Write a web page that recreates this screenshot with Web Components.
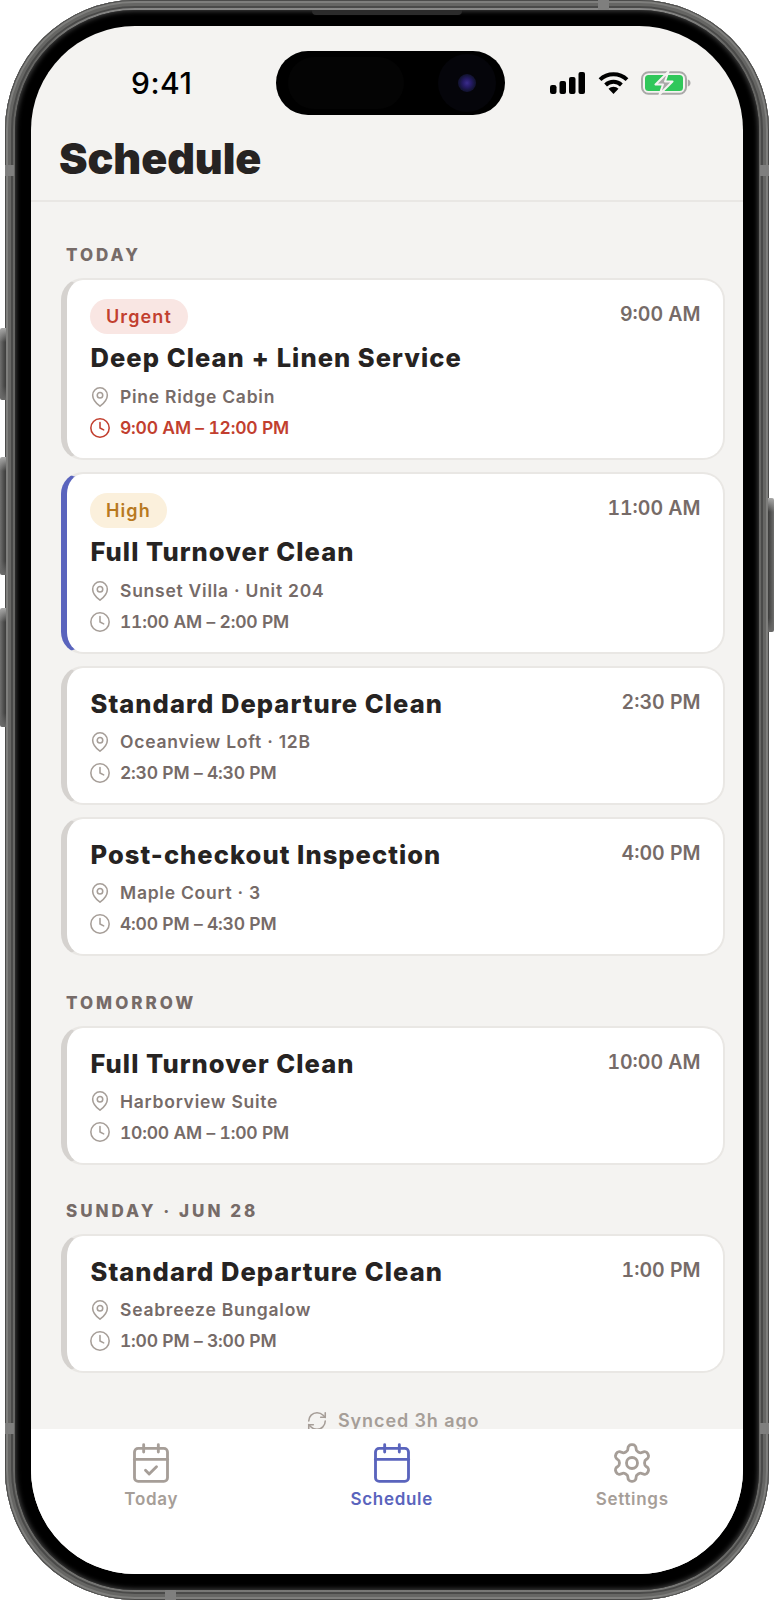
<!doctype html>
<html lang="en">
<head>
<meta charset="utf-8">
<title>Schedule</title>
<style>
  html, body { margin: 0; padding: 0; background: #fff; }
  body { width: 774px; height: 1600px; overflow: hidden; font-family: Inter, "Noto Sans", sans-serif; }
</style>
</head>
<body>
<phone-frame>
  <status-bar slot="status"></status-bar>
  <screen-title slot="title">Schedule</screen-title>

  <day-label>TODAY</day-label>
  <schedule-card time="9:00 AM" priority="urgent" late>
    <span slot="badge">Urgent</span>
    Deep Clean + Linen Service
    <span slot="place">Pine Ridge Cabin</span>
    <span slot="hours">9:00 AM – 12:00 PM</span>
  </schedule-card>
  <schedule-card time="11:00 AM" priority="high" current>
    <span slot="badge">High</span>
    Full Turnover Clean
    <span slot="place">Sunset Villa · Unit 204</span>
    <span slot="hours">11:00 AM – 2:00 PM</span>
  </schedule-card>
  <schedule-card time="2:30 PM">
    Standard Departure Clean
    <span slot="place">Oceanview Loft · 12B</span>
    <span slot="hours">2:30 PM – 4:30 PM</span>
  </schedule-card>
  <schedule-card time="4:00 PM">
    Post-checkout Inspection
    <span slot="place">Maple Court · 3</span>
    <span slot="hours">4:00 PM – 4:30 PM</span>
  </schedule-card>

  <day-label>TOMORROW</day-label>
  <schedule-card time="10:00 AM">
    Full Turnover Clean
    <span slot="place">Harborview Suite</span>
    <span slot="hours">10:00 AM – 1:00 PM</span>
  </schedule-card>

  <day-label>SUNDAY · JUN 28</day-label>
  <schedule-card time="1:00 PM">
    Standard Departure Clean
    <span slot="place">Seabreeze Bungalow</span>
    <span slot="hours">1:00 PM – 3:00 PM</span>
  </schedule-card>

  <sync-note>Synced 3h ago</sync-note>

  <tab-bar slot="tabs">
    <tab-item icon="calendar-check">Today</tab-item>
    <tab-item icon="calendar" active>Schedule</tab-item>
    <tab-item icon="settings">Settings</tab-item>
  </tab-bar>
</phone-frame>

<script>
const ICONS = {
  pin: `<path d="M20 10c0 6-8 12-8 12s-8-6-8-12a8 8 0 0 1 16 0Z"/><circle cx="12" cy="10" r="3"/>`,
  clock: `<circle cx="12" cy="12" r="10"/><polyline points="12 6 12 12 16 14"/>`,
  sync: `<path d="M3 12a9 9 0 0 1 9-9 9.75 9.75 0 0 1 6.74 2.74L21 8"/><path d="M21 3v5h-5"/><path d="M21 12a9 9 0 0 1-9 9 9.75 9.75 0 0 1-6.74-2.74L3 16"/><path d="M8 16H3v5"/>`,
  calendar: `<path d="M8 2v4"/><path d="M16 2v4"/><rect x="3" y="4" width="18" height="18" rx="2"/><path d="M3 10h18"/>`,
  "calendar-check": `<path d="M8 2v4"/><path d="M16 2v4"/><rect x="3" y="4" width="18" height="18" rx="2"/><path d="M3 10h18"/><path d="m9 16 2 2 4-4"/>`,
  settings: `<path d="M12.22 2h-.44a2 2 0 0 0-2 2v.18a2 2 0 0 1-1 1.73l-.43.25a2 2 0 0 1-2 0l-.15-.08a2 2 0 0 0-2.73.73l-.22.38a2 2 0 0 0 .73 2.73l.15.1a2 2 0 0 1 1 1.72v.51a2 2 0 0 1-1 1.74l-.15.09a2 2 0 0 0-.73 2.73l.22.38a2 2 0 0 0 2.73.73l.15-.08a2 2 0 0 1 2 0l.43.25a2 2 0 0 1 1 1.73V20a2 2 0 0 0 2 2h.44a2 2 0 0 0 2-2v-.18a2 2 0 0 1 1-1.73l.43-.25a2 2 0 0 1 2 0l.15.08a2 2 0 0 0 2.73-.73l.22-.39a2 2 0 0 0-.73-2.73l-.15-.08a2 2 0 0 1-1-1.74v-.5a2 2 0 0 1 1-1.74l.15-.09a2 2 0 0 0 .73-2.73l-.22-.38a2 2 0 0 0-2.73-.73l-.15.08a2 2 0 0 1-2 0l-.43-.25a2 2 0 0 1-1-1.73V4a2 2 0 0 0-2-2z"/><circle cx="12" cy="12" r="3"/>`,
}

class ShadowElement extends HTMLElement {
  static css = ""
  static template = ""

  constructor() {
    super(...arguments)

    const shadow = this.attachShadow({ mode: "open" })

    shadow.innerHTML = `
      <style>
        ${this.constructor.css}
      </style>

      ${this.constructor.template}
    `
  }
}

class AppIcon extends ShadowElement {
  static observedAttributes = ["name"]

  static css = /* css */ `
    :host { display: block; flex: none; width: var(--size, 22px); height: var(--size, 22px); }
    svg {
      display: block;
      width: 100%;
      height: 100%;
      fill: none;
      stroke: currentColor;
      stroke-width: var(--stroke, 1.7);
      stroke-linecap: round;
      stroke-linejoin: round;
    }
  `

  static template = /* html */ `<svg viewBox="0 0 24 24"></svg>`

  attributeChangedCallback(name, oldValue, newValue) {
    this.shadowRoot.querySelector("svg").innerHTML = ICONS[newValue] || ""
  }
}

class PhoneFrame extends ShadowElement {
  static css = /* css */ `
    :host { display: block; position: relative; width: 774px; height: 1600px; padding: 0 5px; box-sizing: border-box; }
    .titanium {
      height: 100%;
      box-sizing: border-box;
      padding: 10px;
      border-radius: 130px;
      background: linear-gradient(180deg, #8f8f8e 0, #666664 3%, #686866 97%, #7b7b79 100%);
      box-shadow: inset 0 0 0 1px #4c4c4b, inset 0 0 0 3px #7f7f7d, inset 0 0 0 6px #666664, inset 0 0 0 8px #4a4a49;
    }
    .bezel {
      height: 100%;
      box-sizing: border-box;
      padding: 16px;
      border-radius: 120px;
      background: #000;
      box-shadow: inset 0 0 5px 1px #444;
    }
    .screen {
      display: flex;
      flex-direction: column;
      height: 100%;
      border-radius: 104px;
      overflow: hidden;
      background: #f4f3f1;
    }
    header { flex: none; border-bottom: 2px solid #e9e7e4; }
    main {
      flex: 1;
      min-height: 0;
      overflow: hidden;
      display: flex;
      flex-direction: column;
      gap: 12px;
      padding: 18.5px 18.5px 0 30px;
    }
    .island {
      position: absolute;
      top: 51px;
      left: 276px;
      width: 229px;
      height: 64px;
      border-radius: 32px;
      background: #000;
    }
    .island i { position: absolute; border-radius: 50%; }
    .island .sensor { left: 12px; top: 6px; width: 116px; height: 52px; border-radius: 26px; background: #040404; }
    .island .well { left: 162px; top: 3px; width: 58px; height: 58px; background: #05050a; }
    .island .lens {
      left: 182px;
      top: 23px;
      width: 18px;
      height: 18px;
      background: radial-gradient(circle at 50% 50%, #3a2c8c 0, #241a63 35%, #15153a 60%, #0b0b18 100%);
    }
    .btn {
      position: absolute;
      width: 6px;
      background:
        linear-gradient(180deg, #a9a9a8 0, transparent 14px, transparent calc(100% - 14px), #6a6a69 100%),
        linear-gradient(90deg, #6f6f6e, #4e4e4d 60%, #3c3c3b);
      border-radius: 2px 0 0 2px;
    }
    .btn.mute { left: 0; top: 328px; height: 72px; }
    .btn.up { left: 0; top: 457px; height: 118px; }
    .btn.down { left: 0; top: 608px; height: 119px; }
    .btn.power {
      right: 0;
      top: 498px;
      height: 134px;
      border-radius: 0 2px 2px 0;
      background:
        linear-gradient(180deg, #a9a9a8 0, transparent 14px, transparent calc(100% - 14px), #6a6a69 100%),
        linear-gradient(270deg, #6f6f6e, #4e4e4d 60%, #3c3c3b);
    }
    .band { position: absolute; background: #7f7f7e; }
    .band.t { top: 0; left: 598px; width: 11px; height: 10px; }
    .band.b { bottom: 0; left: 165px; width: 11px; height: 10px; }
    .band.l { left: 5px; width: 9px; height: 11px; }
    .band.r { right: 5px; width: 9px; height: 11px; }
    .slot {
      position: absolute;
      top: 10px;
      left: 312px;
      width: 150px;
      height: 5px;
      border-radius: 0 0 4px 4px;
      background: #2b2b2b;
    }
  `

  static template = /* html */ `
    <i class="btn mute"></i><i class="btn up"></i><i class="btn down"></i><i class="btn power"></i>
    <div class="titanium">
      <div class="bezel">
        <div class="screen">
          <header>
            <slot name="status"></slot>
            <slot name="title"></slot>
          </header>
          <main><slot></slot></main>
          <slot name="tabs"></slot>
        </div>
      </div>
    </div>
    <i class="band t"></i><i class="band b"></i>
    <i class="band l" style="top:165px"></i><i class="band l" style="top:1423px"></i>
    <i class="band r" style="top:165px"></i><i class="band r" style="top:1423px"></i>
    <i class="slot"></i>
    <div class="island"><i class="sensor"></i><i class="well"></i><i class="lens"></i></div>
  `
}

class StatusBar extends ShadowElement {
  static css = /* css */ `
    :host {
      display: flex;
      align-items: center;
      justify-content: space-between;
      height: 100px;
      box-sizing: border-box;
      padding: 14px 52px 0 100px;
      color: #000;
    }
    .time { font: 500 30px/1 Inter, "Liberation Sans", sans-serif; letter-spacing: .5px; }
    .icons { display: flex; align-items: center; gap: 12px; }
    svg { display: block; }
  `

  static template = /* html */ `
    <span class="time">9:41</span>
    <div class="icons">
      <svg width="36" height="22" viewBox="0 0 36 22">
        <rect x="0" y="13" width="6.5" height="9" rx="2.2"/>
        <rect x="9.5" y="9" width="6.5" height="13" rx="2"/>
        <rect x="19" y="5" width="6.5" height="17" rx="2"/>
        <rect x="28.5" y="0" width="6.5" height="22" rx="2"/>
      </svg>
      <svg width="31" height="22" viewBox="0 0 31 22" fill="none" stroke="#000" stroke-width="4">
        <path d="M2 7.6a19.5 19.5 0 0 1 27 0"/>
        <path d="M7.6 13a11.4 11.4 0 0 1 15.8 0"/>
        <path d="M15.5 22l-5-5.2a7 7 0 0 1 10 0z" fill="#000" stroke="none"/>
      </svg>
      <svg width="50" height="24" viewBox="0 0 50 24">
        <rect x="1" y="1.2" width="44" height="21.6" rx="6.5" fill="none" stroke="#a9a9a8" stroke-width="2"/>
        <rect x="4" y="4" width="38" height="16" rx="3.5" fill="#30c75a"/>
        <path d="M46.8 8.5c1.8.4 2.7 1.8 2.7 3.5s-.9 3.1-2.7 3.5z" fill="#a9a9a8"/>
        <path d="M27.5 0.5 L14.5 13.5 H22 L18.5 23.5 L31.5 10.5 H24 Z" fill="#a9a9a8" stroke="#f4f3f1" stroke-width="2" stroke-linejoin="round"/>
      </svg>
    </div>
  `
}

class ScreenTitle extends ShadowElement {
  static css = /* css */ `
    :host {
      display: block;
      padding: 2px 0 12px 28px;
      font: 900 43px/60px Inter, sans-serif;
      letter-spacing: -.1px;
      color: #262322;
    }
  `

  static template = /* html */ `<slot></slot>`
}

class DayLabel extends ShadowElement {
  static css = /* css */ `
    :host {
      display: block;
      margin: 24.5px 0 1px;
      padding-left: 5px;
      font: 800 17px/20px Inter, sans-serif;
      letter-spacing: 3px;
      color: #766b68;
    }
  `

  static template = /* html */ `<slot></slot>`
}

class ScheduleCard extends ShadowElement {
  static css = /* css */ `
    :host {
      display: flex;
      flex: none;
      box-sizing: border-box;
      padding: 19px 22px 15px 23px;
      border: 2px solid #e9e7e4;
      border-left: 6px solid #d5d2cf;
      border-radius: 22px;
      background: #fff;
    }
    :host([current]) { border-left-color: #5a64bd; }
    .main { flex: 1; min-width: 0; }
    .badge {
      display: none;
      width: fit-content;
      margin: 0 0 7px;
      padding: 0 16px;
      border-radius: 18px;
      font: 600 18px/35px Inter, sans-serif;
      letter-spacing: 1.1px;
    }
    :host([priority="urgent"]) .badge { display: block; background: #f9e6e3; color: #c23f2f; }
    :host([priority="high"]) .badge { display: block; background: #fbf0dc; color: #b8791f; }
    .title {
      margin: 0 0 5px .5px;
      font: 800 25.5px/34px Inter, sans-serif;
      letter-spacing: 1.05px;
      color: #262322;
    }
    :host([priority]) .title { margin-bottom: 6px; }
    .row {
      display: flex;
      align-items: center;
      gap: 9px;
      height: 31px;
      margin-left: -1px;
      font: 600 17.5px/31px Inter, sans-serif;
      letter-spacing: .75px;
      color: #766b68;
    }
    app-icon { color: #a69e98; }
    .hours { letter-spacing: -.2px; font-variant-numeric: tabular-nums; }
    :host([late]) .hours, :host([late]) .hours app-icon { color: #c23f2f; }
    .time {
      flex: none;
      font: 600 19.5px/30px Inter, sans-serif;
      font-variant-numeric: tabular-nums;
      color: #766b68;
    }
  `

  static template = /* html */ `
    <div class="main">
      <div class="badge"><slot name="badge"></slot></div>
      <div class="title"><slot></slot></div>
      <div class="row"><app-icon name="pin"></app-icon><slot name="place"></slot></div>
      <div class="row hours"><app-icon name="clock"></app-icon><slot name="hours"></slot></div>
    </div>
    <div class="time"></div>
  `

  connectedCallback() {
    this.shadowRoot.querySelector(".time").textContent = this.getAttribute("time")
  }
}

class SyncNote extends ShadowElement {
  static css = /* css */ `
    :host {
      display: flex;
      flex: none;
      align-items: center;
      justify-content: center;
      gap: 10px;
      margin-top: 21px;
      height: 30px;
      font: 600 18px/30px Inter, sans-serif;
      letter-spacing: .9px;
      color: #a69e98;
    }
  `

  static template = /* html */ `<app-icon name="sync"></app-icon><slot></slot>`
}

class TabBar extends ShadowElement {
  static css = /* css */ `
    :host {
      display: grid;
      flex: none;
      grid-template-columns: repeat(3, 240.5px);
      height: 145px;
      box-sizing: border-box;
      padding-top: 12px;
      background: #fff;
    }
  `

  static template = /* html */ `<slot></slot>`
}

class TabItem extends ShadowElement {
  static css = /* css */ `
    :host {
      display: flex;
      flex-direction: column;
      align-items: center;
      gap: 1px;
      font: 600 17px/26px Inter, sans-serif;
      letter-spacing: .7px;
      color: #a69e98;
      --size: 44px;
      --stroke: 1.55;
    }
    :host([active]) { color: #5a64bd; }
  `

  static template = /* html */ `<app-icon></app-icon><slot></slot>`

  connectedCallback() {
    this.shadowRoot.querySelector("app-icon").setAttribute("name", this.getAttribute("icon"))
  }
}

const elements = {
  "app-icon": AppIcon,
  "phone-frame": PhoneFrame,
  "status-bar": StatusBar,
  "screen-title": ScreenTitle,
  "day-label": DayLabel,
  "schedule-card": ScheduleCard,
  "sync-note": SyncNote,
  "tab-bar": TabBar,
  "tab-item": TabItem,
}

Object.entries(elements).forEach(([tagName, elementClass]) => {
  window.customElements.define(tagName, elementClass)
})
</script>
</body>
</html>
